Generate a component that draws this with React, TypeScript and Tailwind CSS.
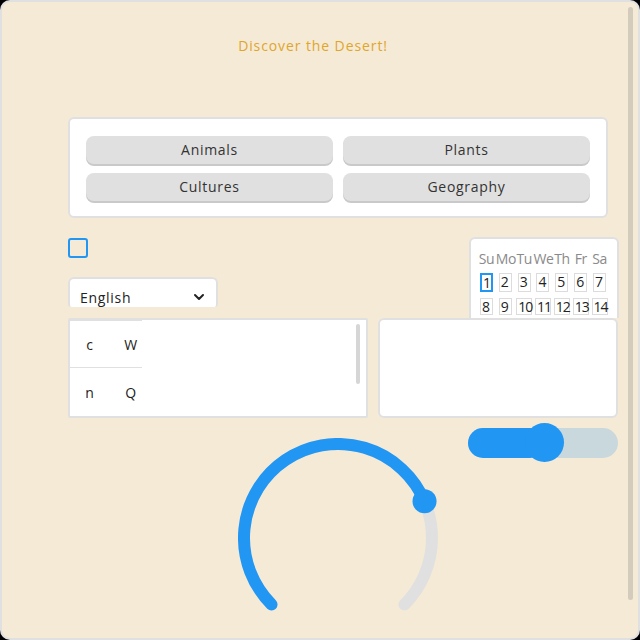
const font = { fontFamily: '"Open Sans", "Noto Sans", sans-serif' };

const days = [1, 2, 3, 4, 5, 6, 7, 8, 9, 10, 11, 12, 13, 14];
const heads = ['Su', 'Mo', 'Tu', 'We', 'Th', 'Fr', 'Sa'];

// angle in degrees, measured clockwise from 12 o'clock
const pt = (deg: number) => {
  const r = (deg * Math.PI) / 180;
  return [100 + 94 * Math.sin(r), 100 - 94 * Math.cos(r)];
};

const Dial = ({ value }: { value: number }) => {
  const [sx, sy] = pt(-135);
  const [ex, ey] = pt(135);
  const [kx, ky] = pt(value);
  const large = value + 135 > 180 ? 1 : 0;
  return (
    <svg width="200" height="200" viewBox="0 0 200 200">
      <path d={`M ${sx} ${sy} A 94 94 0 1 1 ${ex} ${ey}`} fill="none" stroke="#e0e0e0" strokeWidth="12" strokeLinecap="round" />
      <path d={`M ${sx} ${sy} A 94 94 0 ${large} 1 ${kx} ${ky}`} fill="none" stroke="#2196f3" strokeWidth="12" strokeLinecap="round" />
      <circle cx={kx} cy={ky} r="12" fill="#2196f3" />
    </svg>
  );
};

const TopicButton = ({ label }: { label: string }) => (
  <button className="h-[28px] rounded-[8px] bg-[#e0e0e0] text-[14px] text-[#333] shadow-[0_2px_0_#c9c9c9] leading-none">
    {label}
  </button>
);

export default function App() {
  return (
    <div className="w-[640px] h-[640px] bg-black tracking-[0.7px]" style={font}>
      <div className="relative h-full rounded-[10px] border-2 border-[#e0e0e0] bg-[#f5ead6] overflow-hidden">
        {/* overlay scrollbar */}
        <div className="absolute right-[5px] top-[5px] h-[593px] w-[5px] rounded-full bg-[#d3cbbb]" />

        <h1 className="w-[622px] pt-[34px] text-center text-[14px] leading-[20px] tracking-[0.9px] text-[#dfa62c]">Discover the Desert!</h1>

        <div className="ml-[66px] w-[550px]">
          {/* topics card */}
          <div className="mt-[61px] w-[540px] rounded-[6px] border-2 border-[#e0e0e0] bg-white px-[16px] pt-[17px] pb-[15px]">
            <div className="grid grid-cols-2 gap-x-[10px] gap-y-[9px]">
              <TopicButton label="Animals" />
              <TopicButton label="Plants" />
              <TopicButton label="Cultures" />
              <TopicButton label="Geography" />
            </div>
          </div>

          {/* checkbox, select, calendar */}
          <div className="mt-[20px] flex h-[80px] justify-between">
            <div className="flex flex-col">
              <div className="h-[20px] w-[20px] rounded-[3px] border-2 border-[#2196f3] bg-[#f5ead6]" />
              <div className="mt-[19px] flex h-[30px] w-[150px] items-end justify-between overflow-hidden rounded-t-[6px] rounded-b-[3px] border-2 border-b-0 border-[#e0e0e0] bg-white px-[10px]">
                <span className="mb-[-1px] text-[14px] leading-[20px] text-[#222]">English</span>
                <svg width="16" height="16" viewBox="0 0 24 24" className="mb-[2px] mr-[-1px]" fill="none" stroke="#222" strokeWidth="3" strokeLinecap="round" strokeLinejoin="round">
                  <polyline points="6 9 12 15 18 9" />
                </svg>
              </div>
            </div>
            <div className="mr-[-1px] mt-[-1px] w-[150px] overflow-hidden rounded-t-[6px] border-2 border-b-0 border-[#e0e0e0] bg-white px-[6px] pt-[11px]">
              <div className="grid grid-cols-7 w-[132px] text-center text-[14px] leading-[17px] tracking-[-0.5px]">
                {heads.map((h) => (
                  <span key={h} className="text-[#8a8a8a]">{h}</span>
                ))}
              </div>
              <div className="mt-[6px] grid grid-cols-7 w-[132px] gap-y-[6px] justify-items-center text-[14px] leading-[15px] text-[#222]">
                {days.map((d) => (
                  <span
                    key={d}
                    className={`px-[1px] tracking-[-1px] ${d === 1 ? 'border-2 border-[#2196f3]' : 'border border-[#dcdcdc]'} ${d > 9 ? 'w-[16px]' : 'w-[13px]'}`}
                  >
                    {d}
                  </span>
                ))}
              </div>
            </div>
          </div>

          {/* list view + text area */}
          <div className="flex gap-[10px]">
            <div className="relative flex h-[100px] w-[300px] rounded-[2px] border-2 border-[#e0e0e0] bg-white">
              <div className="w-[72px] overflow-hidden border-t border-[#e0e0e0] text-[14px] text-[#222]">
                <div className="flex h-[47px] items-center border-b border-[#e0e0e0]">
                  <span className="w-[40px] shrink-0 text-center">c</span>
                  <span className="w-[42px] shrink-0 text-center">W</span>
                </div>
                <div className="flex h-[48px] items-center">
                  <span className="w-[40px] shrink-0 text-center">n</span>
                  <span className="w-[42px] shrink-0 text-center">Q</span>
                </div>
              </div>
              <div className="absolute right-[6px] top-[4px] h-[60px] w-[4px] rounded-full bg-[#d6d6d6]" />
            </div>
            <div className="h-[100px] w-[240px] rounded-[6px] border-2 border-[#e0e0e0] bg-white" />
          </div>

          {/* slider */}
          <div className="mt-[10px] flex justify-end">
            <div className="relative h-[30px] w-[150px] rounded-full bg-[#c9d8dc]">
              <div className="h-full w-[77px] rounded-full bg-[#2196f3]" />
              <div className="absolute left-[57px] top-[-5px] h-[39px] w-[39px] rounded-full bg-[#2196f3]" />
            </div>
          </div>

          {/* dial */}
          <div className="ml-[170px] mt-[-20px]">
            <Dial value={67} />
          </div>
        </div>
      </div>
    </div>
  );
}
